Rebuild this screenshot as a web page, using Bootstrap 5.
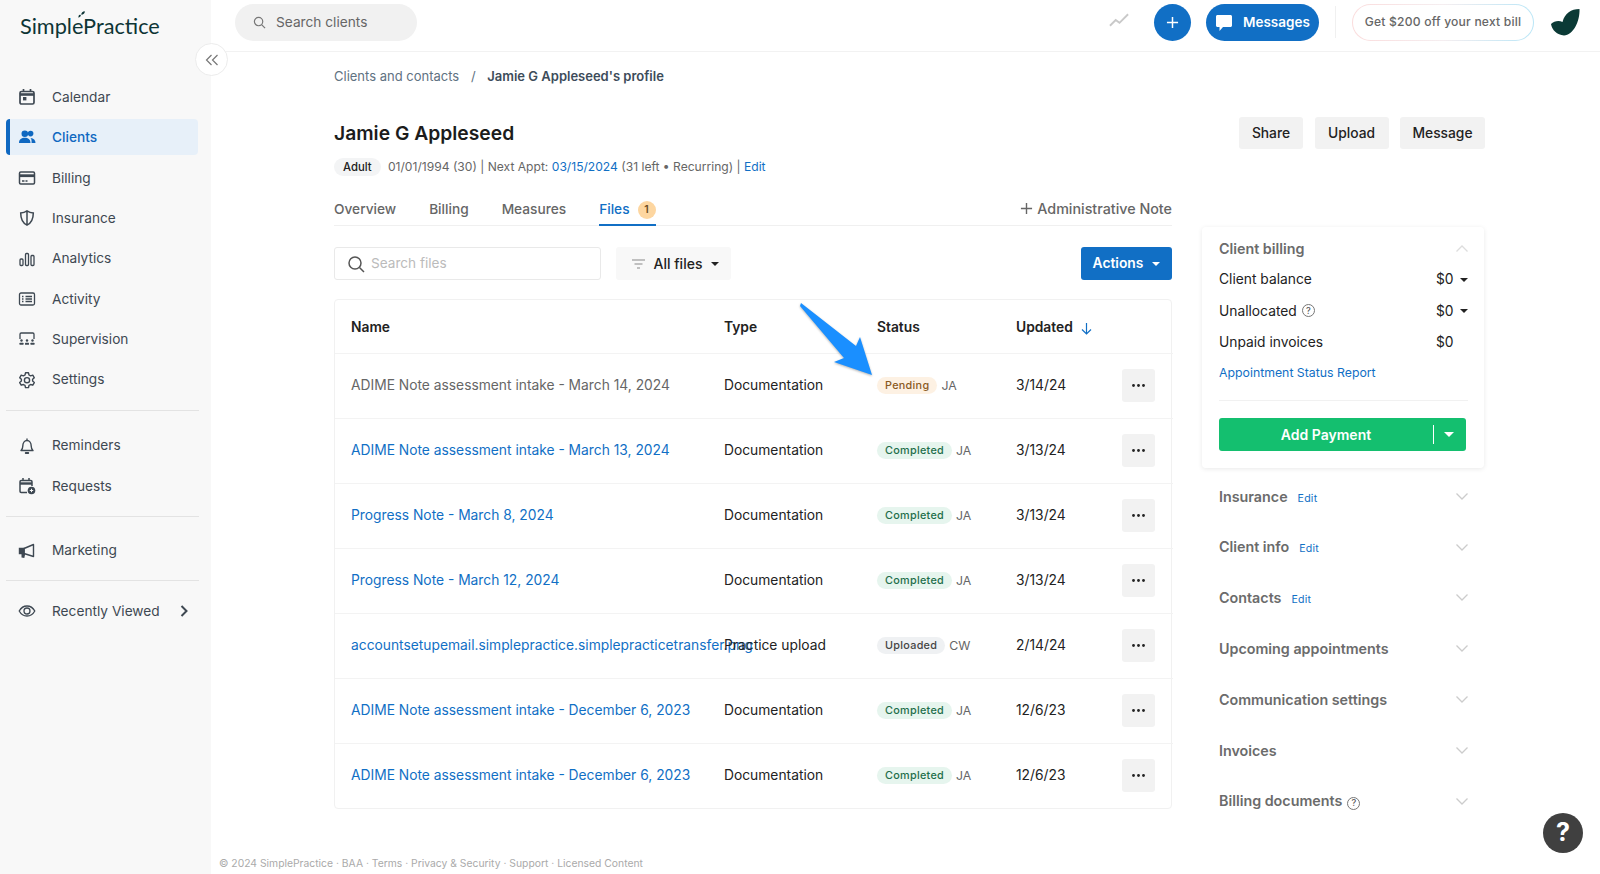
<!DOCTYPE html>
<html lang="en">
<head>
    <meta charset="UTF-8">
    <meta name="viewport" content="width=device-width, initial-scale=1.0">
    <title>Jamie G Appleseed's profile - SimplePractice</title>
    <link href="https://cdn.jsdelivr.net/npm/bootstrap@5.3.0/dist/css/bootstrap.min.css" rel="stylesheet">
    <style>
        body {
            font-family: Inter, "Liberation Sans", sans-serif;
            font-size: 13.8px;
            color: #222;
            height: 874px;
            overflow: hidden;
            position: relative;
        }
        a { text-decoration: none; color: #116fc5; }
        .side-bar { width: 211px; flex: none; background: #f8f8f8; height: 874px; }
        .brand-row { height: 79px; padding: 11px 0 0 20px; }
        .brand-name { font-family: Lato, sans-serif; font-size: 21.7px; line-height: 30px; color: #0e3535; position: relative; display: inline-block; }
        .brand-leaf { position: absolute; left: 57px; top: -1px; }
        .side-link { height: 36px; margin: 0 13px 4.4px 6px; padding-left: 10px; border-left: 4px solid transparent; border-radius: 4px; color: #3e4852; display: flex; align-items: center; font-size: 13.7px; }
        .side-link svg { width: 18px; height: 18px; flex: none; margin-right: 16px; margin-left: -2px; }
        .side-link svg.go-arrow { margin-right: 5px; }
        .side-link.is-on { background: #e7f0f9; border-left-color: #0f68c1; color: #0f68c1; font-weight: 500; }
        .side-rule { height: 1px; background: #e3e3e3; margin: 12px 12px 17px 6px; }
        .side-rule.is-mid { margin-bottom: 15.5px; }
        .side-rule.is-tight { margin-bottom: 12px; margin-top: 11.5px; }
        .collapse-btn { position: absolute; left: 195px; top: 43px; width: 33px; height: 33px; border-radius: 50%; background: #fff; border: 1px solid #ececec; display: flex; align-items: center; justify-content: center; z-index: 5; }

        .top-bar { height: 52px; border-bottom: 1px solid #f2f2f2; padding: 4px 19px 0 24px; }
        .client-search { width: 182px; height: 37px; border-radius: 19px; background: #f1f1f1; color: #666; padding-left: 18px; gap: 10px; font-size: 13.7px; }
        .round-plus { width: 37px; height: 37px; border-radius: 50%; background: #116fc5; color: #fff; border: 0; padding: 0; margin-left: 24px; }
        .msg-btn { width: 113px; height: 37px; border-radius: 19px; background: #116fc5; color: #fff; border: 0; padding: 0 0 0 9px; margin-left: 15px; font-weight: 600; gap: 10px; font-size: 13.5px; }
        .top-divider { width: 1px; height: 32px; background: #f0f0f0; margin: 2px 16px 0; }
        .promo-btn { width: 182px; height: 37px; border-radius: 19px; border: 1px solid transparent; background: linear-gradient(#fff, #fff) padding-box, linear-gradient(90deg, #fbdcdc, #f5eef0 50%, #b9e6f7) border-box; color: #666; font-size: 12.1px; font-weight: 500; padding: 0; letter-spacing: .2px; }
        .top-mark { margin: 4px 0 0 17px; }

        .page-body { padding: 14px 0 0 123px; width: 1273px; }
        .crumbs { height: 20px; line-height: 20px; color: #5f7282; font-size: 13px; }
        .crumbs b { color: #3d4c5a; font-weight: 600; margin-left: 8px; }
        .crumbs i { font-style: normal; margin-left: 8px; }
        .head-row { margin-top: 31px; margin-right: -1px; height: 32px; }
        .patient-name { font-size: 19.3px; font-weight: 600; color: #1c1c1c; margin: 0; padding-top: 2px; }
        .grey-btn { height: 32px; background: #f2f2f2; border: 0; border-radius: 3px; font-weight: 500; color: #222; padding: 0; font-size: 13.8px; }
        .btn-gap { gap: 11.5px; }
        .sub-row { margin-top: 9px; height: 20px; font-size: 12.1px; color: #666; }
        .adult-pill { background: #f3f4f5; color: #222; font-weight: 500; font-size: 11.3px; border-radius: 10px; padding: 2px 9px; margin-right: 4px; }
        .two-cols { gap: 30px; }
        .left-col { width: 838px; flex: none; }
        .right-col { width: 282px; flex: none; margin-top: 49px; font-size: 13.8px; }
        .tab-row { height: 48px; border-bottom: 1px solid #f0f0f0; }
        .tab-link { color: #666; font-weight: 500; padding-top: 21px; height: 48px; line-height: 20px; font-size: 13.7px; }
        .tab-link.is-on { color: #116fc5; border-bottom: 2px solid #116fc5; }
        .count-dot { width: 18px; height: 18px; border-radius: 50%; background: #fdd6a0; color: #6a4a20; font-size: 10.5px; font-weight: 600; display: inline-flex; align-items: center; justify-content: center; margin-left: 8px; vertical-align: 1px; }
        .admin-note { color: #666; font-weight: 500; padding-top: 21px; line-height: 20px; font-size: 14.3px; }
        .tool-row { margin-top: 21px; height: 33px; }
        .file-search { width: 267px; height: 33px; border: 1px solid #e9e9e9; border-radius: 3px; padding-left: 12px; gap: 6px; }
        .file-search input { border: 0; outline: 0; width: 190px; font-size: 13.6px; padding: 0; }
        .file-search input::placeholder { color: #bbb; }
        .filter-btn { width: 115px; height: 33px; background: #f8f8f8; border: 0; border-radius: 3px; margin-left: 15px; font-weight: 500; color: #222; padding: 0 0 0 4px; gap: 9px; font-size: 14px; }
        .caret-down { width: 0; height: 0; border-left: 4px solid transparent; border-right: 4px solid transparent; border-top: 4px solid currentColor; display: inline-block; flex: none; }
        .action-btn { width: 91px; height: 33px; background: #116fc5; color: #fff; border: 0; border-radius: 3px; font-weight: 600; padding: 0; gap: 9px; font-size: 13.8px; }

        .file-box { margin-top: 19px; width: 838px; border: 1px solid #f1f1f1; border-radius: 4px; }
        .file-table { table-layout: fixed; width: 100%; margin: 0; font-size: 13.8px; color: #222; }
        .file-table th, .file-table td { padding: 0 0 0 16px; border-bottom: 1px solid #f3f3f3; white-space: nowrap; vertical-align: middle; height: 65px; box-shadow: none; }
        .file-table th { height: 53px; padding-top: 3px; font-weight: 600; }
        .file-table td:last-child { padding: 0 18px 0 0; text-align: right; }
        .file-table tr:last-child td { border-bottom: 0; }
        .file-table .is-grey { color: #666; }
        .status-pill { font-size: 10.8px; font-weight: 500; border-radius: 9px; padding: 1px 8px; line-height: 15px; display: inline-block; letter-spacing: .3px; vertical-align: 1px; }
        .st-pending { background: #fdf1e3; color: #8a5a1e; }
        .st-done { background: #e6f5ee; color: #1e6e4a; }
        .st-up { background: #eff1f3; color: #444; }
        .who { color: #666; font-size: 12.3px; margin-left: 4px; }
        .more-btn { width: 33px; height: 33px; background: #f2f2f2; border-radius: 3px; border: 0; padding: 0; display: inline-flex; align-items: center; justify-content: center; }

        .bill-card { height: 241px; padding: 6px 16px 0 17px; border-radius: 4px; box-shadow: 0 1px 5px rgba(0,0,0,.09); margin-bottom: 3px; }
        .bill-title { height: 31px; font-weight: 600; color: #6b6b6b; font-size: 14.3px; }
        .bill-line { height: 31.3px; color: #222; }
        .money { width: 24px; }
        .report-link { font-size: 12.3px; height: 30px; line-height: 30px; display: block; }
        .card-rule { height: 1px; background: #f1f1f1; margin: 12px 0 17px; }
        .pay-btn { width: 247px; height: 33px; background: #14bf6f; color: #fff; border: 0; border-radius: 3px; font-weight: 600; padding: 0; position: relative; font-size: 14px; }
        .pay-btn .pay-label { width: 214px; text-align: center; }
        .pay-btn .pay-split { width: 1px; height: 19px; background: #fff; }
        .pay-btn .caret-down { margin-left: 10px; border-left-width: 5px; border-right-width: 5px; border-top-width: 5px; }
        .fold-row { height: 50.8px; padding: 0 16px 0 17px; font-weight: 600; color: #6b6b6b; font-size: 14.3px; }
        .fold-row a { font-size: 10.6px; font-weight: 400; margin-left: 10px; letter-spacing: .2px; }
        .help-dot { width: 13px; height: 13px; border: 1px solid #777; border-radius: 50%; font-size: 9px; color: #555; font-weight: 500; display: inline-flex; align-items: center; justify-content: center; margin-left: 5px; vertical-align: 0; }

        .foot-line { position: absolute; left: 219px; top: 856px; font-size: 10.35px; color: #aaa; }
        .help-fab { position: absolute; left: 1543px; top: 813px; width: 40px; height: 40px; border-radius: 50%; background: #404040; color: #fff; font-size: 25px; font-weight: 700; display: flex; align-items: center; justify-content: center; }
        .pointer-arrow { position: absolute; left: 795px; top: 298px; z-index: 4; filter: drop-shadow(0 1px 1px rgba(0,0,0,.3)); }
    </style>
</head>
<body>
    <div class="d-flex">
        <nav class="side-bar">
            <div class="brand-row">
                <span class="brand-name">SimplePractice
                    <svg class="brand-leaf" width="10" height="9" viewBox="0 0 14 11"><path d="M2 10C2 7 3 5 5 6c1 1 0 3-3 4zM6 6c0-3 2-5 5-5 0 3-2 5-5 5z" fill="#0e3535"/></svg>
                </span>
            </div>
            <a class="side-link" href="#"><svg viewBox="0 0 18 18" fill="none" stroke="currentColor" stroke-width="1.7"><rect x="2" y="3.5" width="14" height="12.5" rx="1.5"/><path d="M2 6.5h14" stroke-width="2.6"/><path d="M5.5 1v3M12.5 1v3" /><rect x="5" y="9" width="3.4" height="3.4" fill="currentColor" stroke="none"/></svg>Calendar</a>
            <a class="side-link is-on" href="#"><svg viewBox="0 0 18 18" fill="currentColor"><circle cx="6.8" cy="5.8" r="3.3"/><circle cx="12.6" cy="5.6" r="2.8"/><path d="M1 15c0-3.6 2.6-5.2 5.8-5.2s5.7 1.6 5.7 5.2zM13.6 15h3.9c0-3-1.8-4.8-5-5 1.2.9 1.1 3.1 1.1 5z"/></svg>Clients</a>
            <a class="side-link" href="#"><svg viewBox="0 0 18 18" fill="none" stroke="currentColor" stroke-width="1.5"><rect x="1.5" y="3" width="15" height="12" rx="1.2"/><path d="M1.5 6.7h15" stroke-width="2.8"/><path d="M4 12h2.5M7.5 12h2" stroke-width="1.3"/></svg>Billing</a>
            <a class="side-link" href="#"><svg viewBox="0 0 18 18" fill="none" stroke="currentColor" stroke-width="1.5"><path d="M9 1.8c2 1.3 4.3 2 6.3 2.2 0 5-1.5 9.8-6.3 12.2C4.2 13.8 2.7 9 2.7 4 4.7 3.8 7 3.1 9 1.8zM9 2v14"/></svg>Insurance</a>
            <a class="side-link" href="#"><svg viewBox="0 0 18 18" fill="none" stroke="currentColor" stroke-width="1.3"><rect x="2" y="9" width="3" height="6.5" rx="1"/><rect x="7.5" y="3.5" width="3" height="12" rx="1"/><rect x="13" y="5.5" width="3" height="10" rx="1"/></svg>Analytics</a>
            <a class="side-link" href="#"><svg viewBox="0 0 18 18" fill="none" stroke="currentColor" stroke-width="1.3"><rect x="1.5" y="3" width="15" height="12" rx="1.5"/><path d="M4 6.5h1.5M4 9h1.5M4 11.5h1.5M7.5 6.5H14M7.5 9H14M7.5 11.5H14"/></svg>Activity</a>
            <a class="side-link" href="#"><svg viewBox="0 0 18 18" fill="none" stroke="currentColor" stroke-width="1.3"><path d="M2 9V4.2C2 3.5 2.5 3 3.2 3h11.6c.7 0 1.2.5 1.2 1.2V9"/><g fill="currentColor" stroke="none"><circle cx="3.5" cy="10.5" r="1.2"/><circle cx="9" cy="10.5" r="1.2"/><circle cx="14.5" cy="10.5" r="1.2"/><rect x="1.5" y="12.8" width="4" height="2" rx=".5"/><rect x="7" y="12.8" width="4" height="2" rx=".5"/><rect x="12.5" y="12.8" width="4" height="2" rx=".5"/></g></svg>Supervision</a>
            <a class="side-link" href="#"><svg viewBox="0 0 18 18" fill="none" stroke="currentColor" stroke-width="1.4"><path d="M7.5 1.8h3l.5 2.2 1.6.9 2.2-.7 1.5 2.6-1.7 1.5v1.8l1.7 1.5-1.5 2.6-2.2-.7-1.6.9-.5 2.2h-3L7 14.4l-1.6-.9-2.2.7-1.5-2.6 1.7-1.5V8.3L1.7 6.8l1.5-2.6 2.2.7L7 4z" stroke-linejoin="round"/><circle cx="9" cy="9.2" r="2.6"/></svg>Settings</a>
            <div class="side-rule"></div>
            <a class="side-link" href="#"><svg viewBox="0 0 18 18" fill="none" stroke="currentColor" stroke-width="1.4"><path d="M3 13.5c1.3-1 1.8-2.3 1.8-4.5 0-3 1.7-5.5 4.2-5.5s4.2 2.5 4.2 5.5c0 2.2.5 3.5 1.8 4.5zM9 1.5v2" stroke-linejoin="round"/><path d="M7.7 16h2.6" stroke-width="1.8" stroke-linecap="round"/></svg>Reminders</a>
            <a class="side-link" href="#"><svg viewBox="0 0 18 18" fill="none" stroke="currentColor" stroke-width="1.5"><path d="M9 15.5H3.2c-.7 0-1.2-.5-1.2-1.2V4.7c0-.7.5-1.2 1.2-1.2h9.6c.7 0 1.2.5 1.2 1.2V9"/><path d="M2 6.5h12" stroke-width="2.4"/><path d="M5 1v3M11 1v3"/><circle cx="13.5" cy="13.5" r="3.8" fill="currentColor" stroke="none"/><path d="M13.5 11.8v3.4M11.8 13.5h3.4" stroke="#f8f8f8" stroke-width="1"/></svg>Requests</a>
            <div class="side-rule is-mid"></div>
            <a class="side-link" href="#"><svg viewBox="0 0 18 18" fill="none" stroke="currentColor" stroke-width="1.4"><path d="M1.5 6.5H6v5H1.5z" fill="currentColor"/><path d="M6 6.5 15.5 2.5v12L6 11.5z" stroke-linejoin="round"/><path d="M3.5 11.5 7.2 12l-.9 4-2.8-.6z" fill="currentColor" stroke="none"/></svg>Marketing</a>
            <div class="side-rule is-tight"></div>
            <a class="side-link" href="#"><svg viewBox="0 0 18 18" fill="none" stroke="currentColor" stroke-width="1.3"><path d="M1.2 9C3 5.8 5.7 4 9 4s6 1.8 7.8 5c-1.8 3.2-4.5 5-7.8 5s-6-1.8-7.8-5z"/><circle cx="9" cy="9" r="3"/></svg>Recently Viewed<svg class="ms-auto go-arrow" viewBox="0 0 18 18" fill="none" stroke="currentColor" stroke-width="2"><path d="M6.5 4l5 5-5 5"/></svg></a>
        </nav>

        <div class="flex-grow-1">
            <header class="top-bar d-flex align-items-start">
                <div class="client-search d-flex align-items-center">
                    <svg width="13" height="13" viewBox="0 0 14 14" fill="none" stroke="#777" stroke-width="1.3"><circle cx="6" cy="6" r="4.5"/><path d="M9.5 9.5 13 13"/></svg>
                    Search clients
                </div>
                <div class="ms-auto d-flex align-items-start">
                    <svg class="mt-2" width="21" height="16" viewBox="0 0 22 16" fill="none" stroke="#c9c9c9" stroke-width="2"><path d="M1 14l6-6 4 3 9-9"/></svg>
                    <button class="round-plus d-flex align-items-center justify-content-center"><svg width="13" height="13" viewBox="0 0 14 14" stroke="#fff" stroke-width="1.6"><path d="M7 1v12M1 7h12"/></svg></button>
                    <button class="msg-btn d-flex align-items-center"><svg width="18" height="18" viewBox="0 0 18 18" fill="#fff"><path d="M2.5 1h13c.8 0 1.5.7 1.5 1.5v9c0 .8-.7 1.5-1.5 1.5H8l-3.5 4v-4h-2C1.7 13 1 12.3 1 11.5v-9C1 1.7 1.7 1 2.5 1z"/></svg>Messages</button>
                    <div class="top-divider"></div>
                    <button class="promo-btn">Get $200 off your next bill</button>
                    <svg class="top-mark" width="30" height="28" viewBox="0 0 30 28" fill="#0b3a36"><path d="M28.5 1C20 1 14 5 11.5 14 8 12 3 13 0 16c1 6 6 11 13 11.5C22 27 29 14 28.5 1z"/></svg>
                </div>
            </header>

            <main class="page-body">
                <div class="crumbs">Clients and contacts <i>/</i> <b>Jamie G Appleseed's profile</b></div>
                <div class="head-row d-flex align-items-center justify-content-between">
                    <h1 class="patient-name">Jamie G Appleseed</h1>
                    <div class="d-flex btn-gap">
                        <button class="grey-btn" style="width:64px">Share</button>
                        <button class="grey-btn" style="width:74px">Upload</button>
                        <button class="grey-btn" style="width:85px">Message</button>
                    </div>
                </div>
                <div class="sub-row"><span class="adult-pill">Adult</span> 01/01/1994 (30) | Next Appt: <a href="#">03/15/2024</a> (31 left • Recurring) | <a href="#">Edit</a></div>

                <div class="d-flex two-cols">
                    <div class="left-col">
                        <div class="tab-row d-flex">
                            <a class="tab-link" href="#">Overview</a>
                            <a class="tab-link" style="margin-left:33px" href="#">Billing</a>
                            <a class="tab-link" style="margin-left:33px" href="#">Measures</a>
                            <a class="tab-link is-on" style="margin-left:33px" href="#">Files<span class="count-dot">1</span></a>
                            <a class="admin-note ms-auto" href="#"><svg class="me-1" width="13" height="13" viewBox="0 0 14 14" stroke="#666" stroke-width="1.5" style="vertical-align:-1px"><path d="M7 1v12M1 7h12"/></svg>Administrative Note</a>
                        </div>
                        <div class="tool-row d-flex">
                            <div class="file-search d-flex align-items-center">
                                <svg width="18" height="18" viewBox="0 0 18 18" fill="none" stroke="#555" stroke-width="1.5"><circle cx="8" cy="8" r="6"/><path d="M12.5 12.5 17 17"/></svg>
                                <input type="text" placeholder="Search files">
                            </div>
                            <button class="filter-btn d-flex align-items-center justify-content-center"><svg width="13" height="10" viewBox="0 0 13 10" stroke="#888" stroke-width="1.1"><path d="M0 1h13M2.5 5h8M5 9h3"/></svg>All files<span class="caret-down"></span></button>
                            <button class="action-btn ms-auto d-flex align-items-center justify-content-center">Actions<span class="caret-down"></span></button>
                        </div>
                        <div class="file-box">
                            <table class="table file-table">
                                <colgroup><col style="width:373px"><col style="width:153px"><col style="width:139px"><col style="width:110px"><col style="width:63px"></colgroup>
                                <thead>
                                    <tr><th>Name</th><th>Type</th><th>Status</th><th>Updated <svg class="ms-1" width="13" height="13" viewBox="0 0 13 13" fill="none" stroke="#116fc5" stroke-width="1.2"><path d="M6.5 1v11M2 7.5l4.5 4.5L11 7.5"/></svg></th><th></th></tr>
                                </thead>
                                <tbody id="fileRows"></tbody>
                            </table>
                        </div>
                    </div>
                    <aside class="right-col">
                        <div class="bill-card">
                            <div class="bill-title d-flex align-items-center justify-content-between">Client billing <svg width="12" height="7" viewBox="0 0 12 7" fill="none" stroke="#ddd" stroke-width="1.3"><path d="M.5 6.5 6 1l5.5 5.5"/></svg></div>
                            <div class="bill-line d-flex align-items-center">Client balance<span class="ms-auto money">$0</span><span class="caret-down"></span></div>
                            <div class="bill-line d-flex align-items-center">Unallocated<span class="help-dot">?</span><span class="ms-auto money">$0</span><span class="caret-down"></span></div>
                            <div class="bill-line d-flex align-items-center">Unpaid invoices<span class="ms-auto money" style="margin-right:8px">$0</span></div>
                            <a class="report-link" href="#">Appointment Status Report</a>
                            <div class="card-rule"></div>
                            <button class="pay-btn d-flex align-items-center"><span class="pay-label">Add Payment</span><span class="pay-split"></span><span class="caret-down"></span></button>
                        </div>
                        <div class="fold-row d-flex align-items-center"><span>Insurance<a href="#">Edit</a></span><svg class="ms-auto" width="12" height="7" viewBox="0 0 12 7" fill="none" stroke="#ccc" stroke-width="1.3"><path d="M.5.5 6 6l5.5-5.5"/></svg></div>
                        <div class="fold-row d-flex align-items-center"><span>Client info<a href="#">Edit</a></span><svg class="ms-auto" width="12" height="7" viewBox="0 0 12 7" fill="none" stroke="#ccc" stroke-width="1.3"><path d="M.5.5 6 6l5.5-5.5"/></svg></div>
                        <div class="fold-row d-flex align-items-center"><span>Contacts<a href="#">Edit</a></span><svg class="ms-auto" width="12" height="7" viewBox="0 0 12 7" fill="none" stroke="#ccc" stroke-width="1.3"><path d="M.5.5 6 6l5.5-5.5"/></svg></div>
                        <div class="fold-row d-flex align-items-center"><span>Upcoming appointments</span><svg class="ms-auto" width="12" height="7" viewBox="0 0 12 7" fill="none" stroke="#ccc" stroke-width="1.3"><path d="M.5.5 6 6l5.5-5.5"/></svg></div>
                        <div class="fold-row d-flex align-items-center"><span>Communication settings</span><svg class="ms-auto" width="12" height="7" viewBox="0 0 12 7" fill="none" stroke="#ccc" stroke-width="1.3"><path d="M.5.5 6 6l5.5-5.5"/></svg></div>
                        <div class="fold-row d-flex align-items-center"><span>Invoices</span><svg class="ms-auto" width="12" height="7" viewBox="0 0 12 7" fill="none" stroke="#ccc" stroke-width="1.3"><path d="M.5.5 6 6l5.5-5.5"/></svg></div>
                        <div class="fold-row d-flex align-items-center"><span>Billing documents<span class="help-dot">?</span></span><svg class="ms-auto" width="12" height="7" viewBox="0 0 12 7" fill="none" stroke="#ccc" stroke-width="1.3"><path d="M.5.5 6 6l5.5-5.5"/></svg></div>
                    </aside>
                </div>
            </main>
        </div>
    </div>

    <div class="collapse-btn"><svg width="14" height="12" viewBox="0 0 14 12" fill="none" stroke="#777" stroke-width="1.2"><path d="M6.5 1 1.5 6l5 5M12.5 1l-5 5 5 5"/></svg></div>
    <svg class="pointer-arrow" width="85" height="85" viewBox="795 298 85 85"><polygon points="801,303 856,346 860,337 872,375 834,362 844,358 800,306" fill="#1a8fff"/></svg>
    <div class="foot-line">© 2024 SimplePractice · BAA · Terms · Privacy &amp; Security · Support · Licensed Content</div>
    <div class="help-fab">?</div>

    <script src="https://cdn.jsdelivr.net/npm/bootstrap@5.3.0/dist/js/bootstrap.bundle.min.js"></script>
    <script>
        const files = [
            ["ADIME Note assessment intake - March 14, 2024", "Documentation", "Pending", "JA", "3/14/24"],
            ["ADIME Note assessment intake - March 13, 2024", "Documentation", "Completed", "JA", "3/13/24"],
            ["Progress Note - March 8, 2024", "Documentation", "Completed", "JA", "3/13/24"],
            ["Progress Note - March 12, 2024", "Documentation", "Completed", "JA", "3/13/24"],
            ["accountsetupemail.simplepractice.simplepracticetransfer.png", "Practice upload", "Uploaded", "CW", "2/14/24"],
            ["ADIME Note assessment intake - December 6, 2023", "Documentation", "Completed", "JA", "12/6/23"],
            ["ADIME Note assessment intake - December 6, 2023", "Documentation", "Completed", "JA", "12/6/23"]
        ];
        const pillClass = { Pending: "st-pending", Completed: "st-done", Uploaded: "st-up" };
        const dots = '<svg width="13" height="3" viewBox="0 0 13 3" fill="#222"><circle cx="1.5" cy="1.5" r="1.4"/><circle cx="6.5" cy="1.5" r="1.4"/><circle cx="11.5" cy="1.5" r="1.4"/></svg>';
        document.getElementById("fileRows").innerHTML = files.map(f => {
            const name = f[2] === "Pending" ? `<span class="is-grey">${f[0]}</span>` : `<a href="#">${f[0]}</a>`;
            return `<tr><td>${name}</td><td>${f[1]}</td><td><span class="status-pill ${pillClass[f[2]]}">${f[2]}</span><span class="who">${f[3]}</span></td><td>${f[4]}</td><td><button class="more-btn">${dots}</button></td></tr>`;
        }).join("");
    </script>
</body>
</html>
